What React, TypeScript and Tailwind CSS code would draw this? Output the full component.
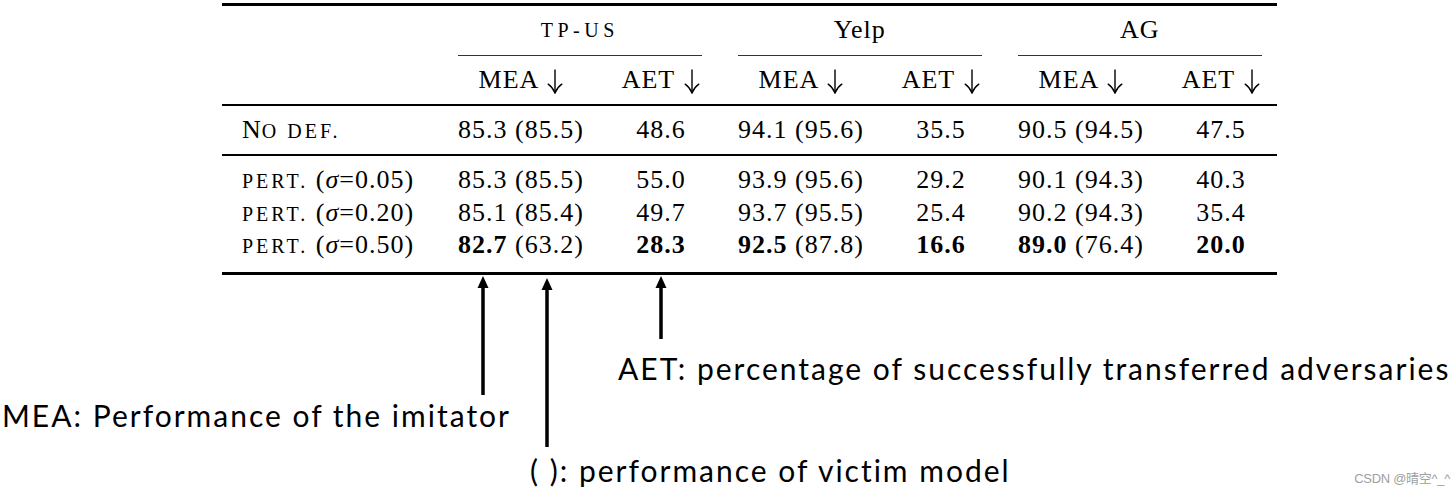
import React from 'react'

const serif = { fontFamily: '"Liberation Serif", "Times New Roman", serif' }
const calibriLike = { fontFamily: 'Lato, "Open Sans", sans-serif' }

type Cell = { v: string; p?: string; b?: boolean }
type Row = { label: React.ReactNode; cells: Cell[] }

// faux small caps: real capitals set smaller and spaced out, like the paper's font
function Sc({ children, wide }: { children: React.ReactNode; wide?: boolean }) {
  return (
    <span className={`uppercase text-[20px] leading-none ${wide ? 'tracking-[4.5px]' : 'tracking-[3px]'}`}>{children}</span>
  )
}

// thin math-style \downarrow
function Down() {
  return (
    <svg className="inline-block align-[-6px] ml-[2px]" width="16" height="25" viewBox="0 0 16 25" fill="none">
      <line x1="8" y1="0.5" x2="8" y2="23.5" stroke="#000" strokeWidth="1.4" />
      <path d="M1.2 15.2 Q5.6 18.2 8 24 Q10.4 18.2 14.8 15.2" stroke="#000" strokeWidth="1.4" strokeLinecap="round" />
    </svg>
  )
}

const noDef: Cell[] = [
  { v: '85.3', p: '(85.5)' }, { v: '48.6' },
  { v: '94.1', p: '(95.6)' }, { v: '35.5' },
  { v: '90.5', p: '(94.5)' }, { v: '47.5' },
]

function Pert({ s }: { s: string }) {
  return (
    <span>
      <Sc>pert.</Sc> (<i>σ</i>=0.{s})
    </span>
  )
}

const pertRows: Row[] = [
  {
    label: <Pert s="05" />,
    cells: [
      { v: '85.3', p: '(85.5)' }, { v: '55.0' },
      { v: '93.9', p: '(95.6)' }, { v: '29.2' },
      { v: '90.1', p: '(94.3)' }, { v: '40.3' },
    ],
  },
  {
    label: <Pert s="20" />,
    cells: [
      { v: '85.1', p: '(85.4)' }, { v: '49.7' },
      { v: '93.7', p: '(95.5)' }, { v: '25.4' },
      { v: '90.2', p: '(94.3)' }, { v: '35.4' },
    ],
  },
  {
    label: <Pert s="50" />,
    cells: [
      { v: '82.7', p: '(63.2)', b: true }, { v: '28.3', b: true },
      { v: '92.5', p: '(87.8)', b: true }, { v: '16.6', b: true },
      { v: '89.0', p: '(76.4)', b: true }, { v: '20.0', b: true },
    ],
  },
]

const gridCols = 'grid grid-cols-[200px_127px_82px_127px_82px_127px_82px] gap-x-[35.5px] pr-[15px]'

function Value({ c }: { c: Cell }) {
  return (
    <span className="text-center whitespace-nowrap">
      <span className={c.b ? 'font-bold' : ''}>{c.v}</span>
      {c.p ? ` ${c.p}` : ''}
    </span>
  )
}

function Arrow({ x, top, bottom }: { x: number; top: number; bottom: number }) {
  return (
    <svg
      className="absolute"
      style={{ left: x - 7, top }}
      width={14}
      height={bottom - top}
      viewBox={`0 0 14 ${bottom - top}`}
    >
      <line x1="7" y1="10" x2="7" y2={bottom - top} stroke="#000" strokeWidth="3.5" />
      <polygon points="7,0 1.5,12 12.5,12" fill="#000" />
    </svg>
  )
}

export default function App() {
  return (
    <div className="relative w-[1456px] h-[498px] bg-white text-black overflow-hidden">
      {/* table */}
      <div className="pt-[3px] pl-[222px]" style={serif}>
        <div className="w-[1055px] border-t-[3px] border-b-[3px] border-black text-[26px] tracking-[1px] leading-[32px]">
          <div className={`${gridCols} h-[49.5px]`}>
            <span />
            {['tp-us', 'Yelp', 'AG'].map((g, i) => (
              <span
                key={g}
                className="col-span-2 flex items-center justify-center border-b-[1.5px] border-[#333]"
              >
                {i === 0 ? <Sc wide>{g}</Sc> : g}
              </span>
            ))}
          </div>
          <div className={`${gridCols} h-[50.5px] items-center border-b-2 border-black`}>
            <span />
            {[0, 1, 2].map((i) => (
              <React.Fragment key={i}>
                <span className="text-center whitespace-nowrap">
                  MEA <Down />
                </span>
                <span className="text-center whitespace-nowrap">
                  AET <Down />
                </span>
              </React.Fragment>
            ))}
          </div>
          <div className={`${gridCols} h-[50px] items-center border-b-2 border-black`}>
            <span className="pl-5 whitespace-nowrap">
              N<Sc>o def.</Sc>
            </span>
            {noDef.map((c, i) => (
              <Value key={i} c={c} />
            ))}
          </div>
          <div className="pt-2 pb-[10px]">
            {pertRows.map((r, ri) => (
              <div key={ri} className={`${gridCols} h-[32.5px] items-center`}>
                <span className="pl-5 whitespace-nowrap">{r.label}</span>
                {r.cells.map((c, i) => (
                  <Value key={i} c={c} />
                ))}
              </div>
            ))}
          </div>
        </div>
      </div>

      {/* annotations */}
      <Arrow x={483} top={276} bottom={395} />
      <Arrow x={547} top={278} bottom={447} />
      <Arrow x={661} top={276} bottom={339} />

      <div className="absolute left-[618px] top-[353px] text-[30px] tracking-[2px] leading-none whitespace-nowrap" style={calibriLike}>
        AET: percentage of successfully transferred adversaries
      </div>
      <div className="absolute left-[2px] top-[400px] text-[30px] tracking-[2px] leading-none whitespace-nowrap" style={calibriLike}>
        MEA: Performance of the imitator
      </div>
      <div className="absolute left-[530px] top-[455px] text-[30px] tracking-[2px] leading-none whitespace-nowrap" style={calibriLike}>
        ( ): performance of victim model
      </div>

      <div
        className="absolute right-[6px] bottom-[10px] text-[13px] text-[#a0a0a0] tracking-[-0.3px]"
        style={{ fontFamily: '"Liberation Sans", "Noto Sans CJK SC", sans-serif' }}
      >
        CSDN @晴空^_^
      </div>
    </div>
  )
}
